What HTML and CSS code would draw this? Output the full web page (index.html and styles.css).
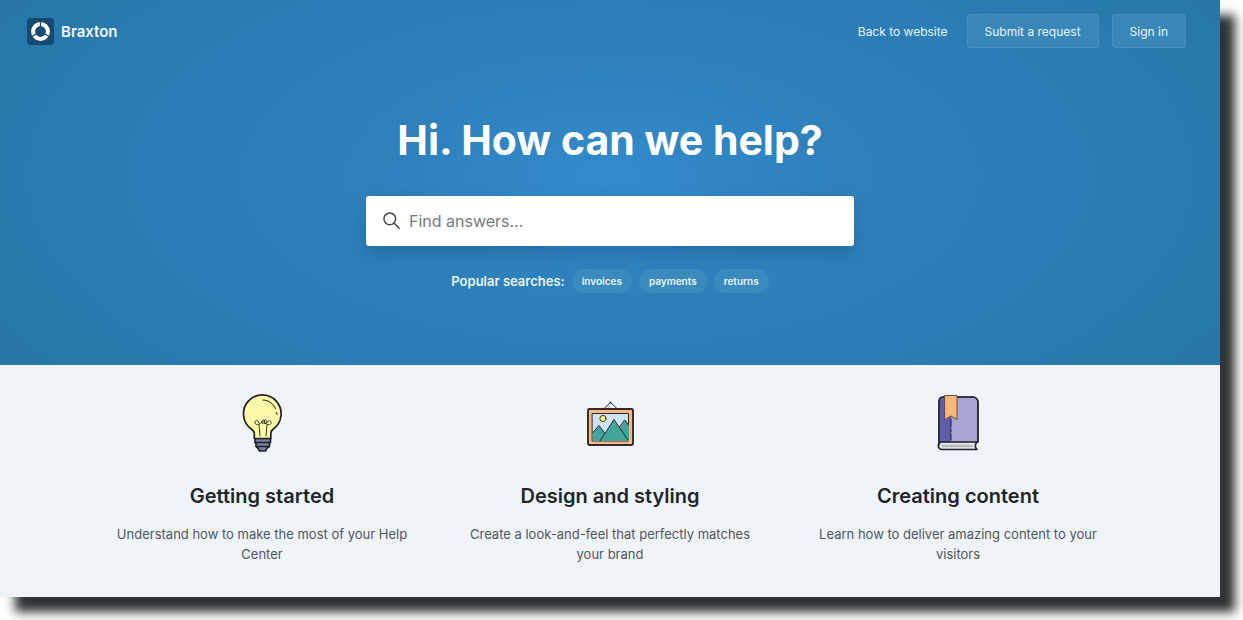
FILE: index.html
```html
<!DOCTYPE html>
<html lang="en">

<head>
  <meta charset="UTF-8" />
  <meta name="viewport" content="width=device-width, initial-scale=1.0" />
  <title>Braxton Help Center</title>
  <link rel="stylesheet" href="styles.css">
</head>

<body>
  <div class="page">
    <div class="hero">
      <header class="header">
        <a href="#" class="logo">
          <svg width="27" height="27" viewBox="0 0 27 27" aria-hidden="true">
            <rect width="27" height="27" rx="4" fill="#174a70" />
            <circle cx="13.5" cy="13.5" r="7.4" fill="none" stroke="#fff" stroke-width="4" />
            <path d="M13.5 13.5V2.5M13.5 13.5L4 19M13.5 13.5L23 19" stroke="#174a70" stroke-width="1.3" />
          </svg>
          Braxton
        </a>
        <nav class="nav">
          <a href="#" class="nav-link">Back to website</a>
          <button class="btn">Submit a request</button>
          <button class="btn">Sign in</button>
        </nav>
      </header>

      <div class="hero-content">
        <h1>Hi. How can we help?</h1>
        <form class="search">
          <svg width="18" height="18" viewBox="0 0 18 18" fill="none" stroke="#444a4e" stroke-width="1.5" stroke-linecap="round" aria-hidden="true">
            <circle cx="6.8" cy="6.8" r="5.9" />
            <path d="M11.2 11.2L16.2 16.2" />
          </svg>
          <input type="search" placeholder="Find answers..." aria-label="Find answers" />
        </form>
        <div class="popular">
          <span>Popular searches:</span>
          <a href="#" class="tag">invoices</a>
          <a href="#" class="tag">payments</a>
          <a href="#" class="tag">returns</a>
        </div>
      </div>
    </div>

    <main class="topics">
      <section class="topic">
        <!-- light bulb -->
        <svg width="60" height="60" viewBox="0 -2 60 60" fill="none" stroke="#1d2126" stroke-linecap="round" stroke-linejoin="round" aria-hidden="true">
          <path d="M23 43.500h15.500v4l-1 1v3l-2 1-2 3.500h-6l-2-3.500-1.500-1v-3l-1-1z" fill="#7780a5" stroke-width="1.600" />
          <path d="M23 47.500h15M24.500 51.500h12.500" stroke-width="1.300" />
          <path d="M22.300 43.500v-5c0-2-1-3-3-4.500a18.800 18.800 0 1 1 22 0c-2 1.500-2.500 2.500-2.500 4.500v5z" fill="#fff8a8" stroke-width="1.700" />
          <path d="M28 41l-1-12c-2 1.500-4.500 0-4-2s3.500-2 4 1c1 1.500 3 0 3.500-2s3-1 2 1-3 2-3-.5M34 41l1-12c2 1.500 5 0 4-2s-3.500-1.500-4 1c-.8 1.200-2.700.5-3-1s1.500-3 2.500-1.500-.5 2.500-2 3" stroke-width=".9" />
          <path d="M31 5c6 0 11 4 12.500 9M44.500 17.500l.5 2" stroke-width="1" />
        </svg>
        <h2>Getting started</h2>
        <p>Understand how to make the most of your Help Center</p>
      </section>

      <section class="topic">
        <!-- picture frame -->
        <svg width="60" height="60" viewBox="0 -1 60 60" fill="none" stroke="#33282a" stroke-linecap="round" stroke-linejoin="round" aria-hidden="true">
          <path d="M23.500 15l7-6.500 7 6.500" stroke-width="1" />
          <circle cx="30.500" cy="8.500" r="1" fill="#33282a" stroke="none" />
          <rect x="8" y="15" width="45" height="36" rx="1.500" fill="#f6b983" stroke-width="1.900" />
          <path d="M12.500 19.500h36v27.500h-36z" fill="#cbe4f5" stroke-width="1" />
          <path d="M12.500 39l6.500-7.500 5 6 1 2 9-14 5.500 8.500 5.500-8 4 4.500v16.500h-36z" fill="#45a59d" stroke="none" />
          <path d="M12.500 39l6.500-7.500 5.500 7.500M20 47l14-21.500L48 46M39.500 33l5-7 4 5" stroke-width="1" />
          <circle cx="23" cy="24.500" r="3.100" fill="#fff176" stroke-width=".9" />
        </svg>
        <h2>Design and styling</h2>
        <p>Create a look-and-feel that perfectly matches your brand</p>
      </section>

      <section class="topic">
        <!-- book with bookmark -->
        <svg width="60" height="60" viewBox="0 0 60 60" fill="none" stroke="#1f2130" stroke-linecap="round" stroke-linejoin="round" aria-hidden="true">
          <path d="M11 49V8a4 4 0 0 1 4-4h30a5 5 0 0 1 5 5v40z" fill="#a8a4d1" />
          <path d="M11 49V8a4 4 0 0 1 4-4h8v45z" fill="#605daa" stroke="none" />
          <path d="M23 26v21" stroke-width="1" stroke-dasharray="8 2 3 2" />
          <path d="M49 49H14a3.500 3.500 0 0 0 0 7.500h35c-2-2-2-5 0-7.500z" fill="#dfe1df" stroke-width="1.600" />
          <path d="M14 53h30" stroke="#8d918f" stroke-width="1.200" />
          <path d="M11 52V8a4 4 0 0 1 4-4h30a5 5 0 0 1 5 5v40" stroke-width="1.600" />
          <path d="M17 2.500h12v24l-6-3.500-6 3.500z" fill="#f9b77c" stroke="#704b3c" stroke-width="1" />
        </svg>
        <h2>Creating content</h2>
        <p>Learn how to deliver amazing content to your visitors</p>
      </section>
    </main>
  </div>
</body>

</html>
```
FILE: styles.css
```css
* {
  box-sizing: border-box;
}

body {
  margin: 0;
  background: #ffffff;
  font-family: Inter, "Liberation Sans", sans-serif;
  color: #1f2528;
}

.page {
  margin: 0 23px 23px 0;
  background: #eff4f9;
  box-shadow: 15px 15px 10px #303333;
}

.hero {
  padding-bottom: 72px;
  background: radial-gradient(ellipse 58% 90% at 50% 48%, #338bcd 0%, #2e81bc 30%, #2c7cb5 65%, #2877a8 100%);
  color: #ffffff;
}

.header {
  display: flex;
  align-items: center;
  justify-content: space-between;
  padding: 14px 34px 0 27px;
}

.logo {
  display: flex;
  align-items: center;
  gap: 7px;
  color: #f0faff;
  font-size: 15px;
  font-weight: 600;
  text-decoration: none;
}

.nav {
  display: flex;
  align-items: center;
  gap: 13px;
}

.nav-link {
  margin-right: 6px;
  color: #e6f6fc;
  font-size: 12px;
  text-decoration: none;
}

.btn {
  height: 34px;
  padding: 0 17px;
  background: #3987b8;
  border: 1px solid #4791bf;
  border-radius: 3px;
  color: #e6f6fc;
  font-family: inherit;
  font-size: 12px;
  cursor: pointer;
}

.hero-content {
  display: flex;
  flex-direction: column;
  align-items: center;
  padding-top: 64px;
}

h1 {
  margin: 0 0 28px;
  font-size: 41px;
  line-height: 56px;
  font-weight: 700;
}

.search {
  display: flex;
  align-items: center;
  gap: 8px;
  width: 40%;
  height: 50px;
  padding: 0 17px;
  background: #ffffff;
  border-radius: 3px;
  box-shadow: 0 8px 16px rgba(20, 60, 100, 0.25);
}

.search input {
  flex: 1;
  min-width: 0;
  padding: 0;
  border: none;
  outline: none;
  background: none;
  font-family: inherit;
  font-size: 16px;
}

.search input::placeholder {
  color: #757b80;
}

.popular {
  display: flex;
  align-items: center;
  gap: 7px;
  margin-top: 23px;
  color: #e6f6fc;
  font-size: 13px;
  font-weight: 600;
}

.tag {
  padding: 0 10px;
  background: #3a8abe;
  border-radius: 12px;
  color: #e6f6fc;
  font-size: 10px;
  line-height: 24px;
  font-weight: 600;
  text-decoration: none;
}

.topics {
  display: grid;
  grid-template-columns: repeat(3, 1fr);
  gap: 48px;
  padding: 28px 112px 33px;
}

.topic {
  display: flex;
  flex-direction: column;
  align-items: center;
  text-align: center;
}

h2 {
  margin: 30px 0 15px;
  font-size: 20px;
  line-height: 26px;
  font-weight: 600;
}

p {
  margin: 0;
  color: #50575c;
  font-size: 13px;
  line-height: 20px;
}
```
